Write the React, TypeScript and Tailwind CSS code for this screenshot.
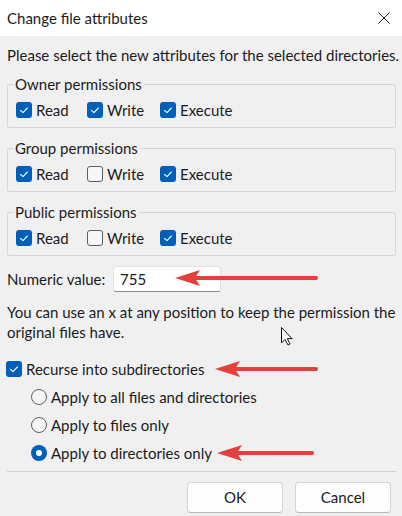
import React from "react";

function Check({ on }: { on: boolean }) {
  return on ? (
    <span className="flex h-4 w-4 shrink-0 items-center justify-center rounded-[3px] bg-[#005fb8]">
      <svg viewBox="0 0 16 16" className="h-4 w-4">
        <path d="M4.6 8.3 L7 10.6 L11.4 6" fill="none" stroke="white" strokeWidth="1.1" strokeLinecap="round" strokeLinejoin="round" />
      </svg>
    </span>
  ) : (
    <span className="h-4 w-4 shrink-0 rounded-[3px] border border-[#5f5f5f] bg-[#f6f6f6]" />
  );
}

function Radio({ on }: { on: boolean }) {
  return on ? (
    <span className="flex h-4 w-4 shrink-0 items-center justify-center rounded-full bg-[#005fb8]">
      <span className="h-[6px] w-[6px] rounded-full bg-white" />
    </span>
  ) : (
    <span className="h-4 w-4 shrink-0 rounded-full border border-[#5f5f5f] bg-[#f6f6f6]" />
  );
}

function Group({ title, perms }: { title: string; perms: boolean[] }) {
  const labels = ["Read", "Write", "Execute"];
  const widths = ["w-[71px]", "w-[73px]", ""];
  return (
    <fieldset className="rounded-[2px] border border-[#d6d6d6] px-2 pt-[6px] pb-[7px]">
      <legend className="-ml-[3px] px-[2px] leading-5">{title}</legend>
      <div className="flex h-5 items-center">
        {labels.map((l, i) => (
          <label key={l} className={`flex items-center gap-1 ${widths[i]}`}>
            <Check on={perms[i]} />
            <span>{l}</span>
          </label>
        ))}
      </div>
    </fieldset>
  );
}

function Arrow({ x1, x2, y }: { x1: number; x2: number; y: number }) {
  return (
    <g>
      <line x1={x1 + 20} y1={y} x2={x2} y2={y} stroke="#e3403f" strokeWidth="4" strokeLinecap="round" />
      <path d={`M${x1} ${y} L${x1 + 25} ${y - 8} L${x1 + 20} ${y} L${x1 + 25} ${y + 8} Z`} fill="#e3403f" />
    </g>
  );
}

export default function App() {
  return (
    <div className="relative h-[516px] w-[402px] overflow-hidden bg-[#f0f0f0] font-['Lato',sans-serif] text-[15px] text-[#1b1b1b]">
      <div className="flex h-9 items-center justify-between bg-white pl-[7px] pr-3">
        <span>Change file attributes</span>
        <svg viewBox="0 0 12 12" className="h-3 w-3">
          <path d="M0.5 0.5 L11.5 11.5 M11.5 0.5 L0.5 11.5" stroke="#1b1b1b" strokeWidth="1" />
        </svg>
      </div>

      <div className="flex flex-col pl-[7px] pr-[6px] pt-[9px]">
        <p className="leading-5 whitespace-nowrap">Please select the new attributes for the selected directories.</p>

        <div className="mt-[9px] flex flex-col gap-[10px]">
          <Group title="Owner permissions" perms={[true, true, true]} />
          <Group title="Group permissions" perms={[true, false, true]} />
          <Group title="Public permissions" perms={[true, false, true]} />
        </div>

        <div className="mt-[10px] flex h-[26px] items-center">
          <span className="w-[106px]">Numeric value:</span>
          <div className="flex h-[26px] w-[108px] items-center rounded-[3px] border border-[#e3e3e3] border-b-[#8a8a8a] bg-white pl-[6px]">
            755
          </div>
        </div>

        <p className="mt-[10px] leading-5">
          You can use an x at any position to keep the permission the original files have.
        </p>

        <label className="-ml-px mt-[17px] flex h-5 items-center gap-1">
          <Check on />
          <span>Recurse into subdirectories</span>
        </label>

        <div className="mt-2 flex flex-col gap-2 pl-6">
          {[
            ["Apply to all files and directories", false],
            ["Apply to files only", false],
            ["Apply to directories only", true],
          ].map(([t, on]) => (
            <label key={t as string} className="flex h-5 items-center gap-1">
              <Radio on={on as boolean} />
              <span>{t as string}</span>
            </label>
          ))}
        </div>

        <div className="mt-2 h-px bg-[#cfcfcf]" />

        <div className="mt-[10px] flex justify-end gap-3 pr-[5px]">
          <button className="h-[31px] w-[96px] rounded-[4px] border border-[#d4d4d4] border-b-[#b8b8b8] bg-[#fdfdfd]">OK</button>
          <button className="h-[31px] w-[96px] rounded-[4px] border border-[#d4d4d4] border-b-[#b8b8b8] bg-[#fdfdfd]">Cancel</button>
        </div>
      </div>

      <svg className="pointer-events-none absolute inset-0 h-full w-full" viewBox="0 0 402 516">
        <Arrow x1={175} x2={316} y={278} />
        <Arrow x1={215} x2={316} y={369} />
        <Arrow x1={217} x2={312} y={453} />
        <path d="M281.5 327.5 L281.5 343 L285 339.5 L288 345 L290 344 L287.3 338.6 L292 338.6 Z" fill="white" stroke="#111" strokeWidth="1" strokeLinejoin="round" />
      </svg>
    </div>
  );
}
